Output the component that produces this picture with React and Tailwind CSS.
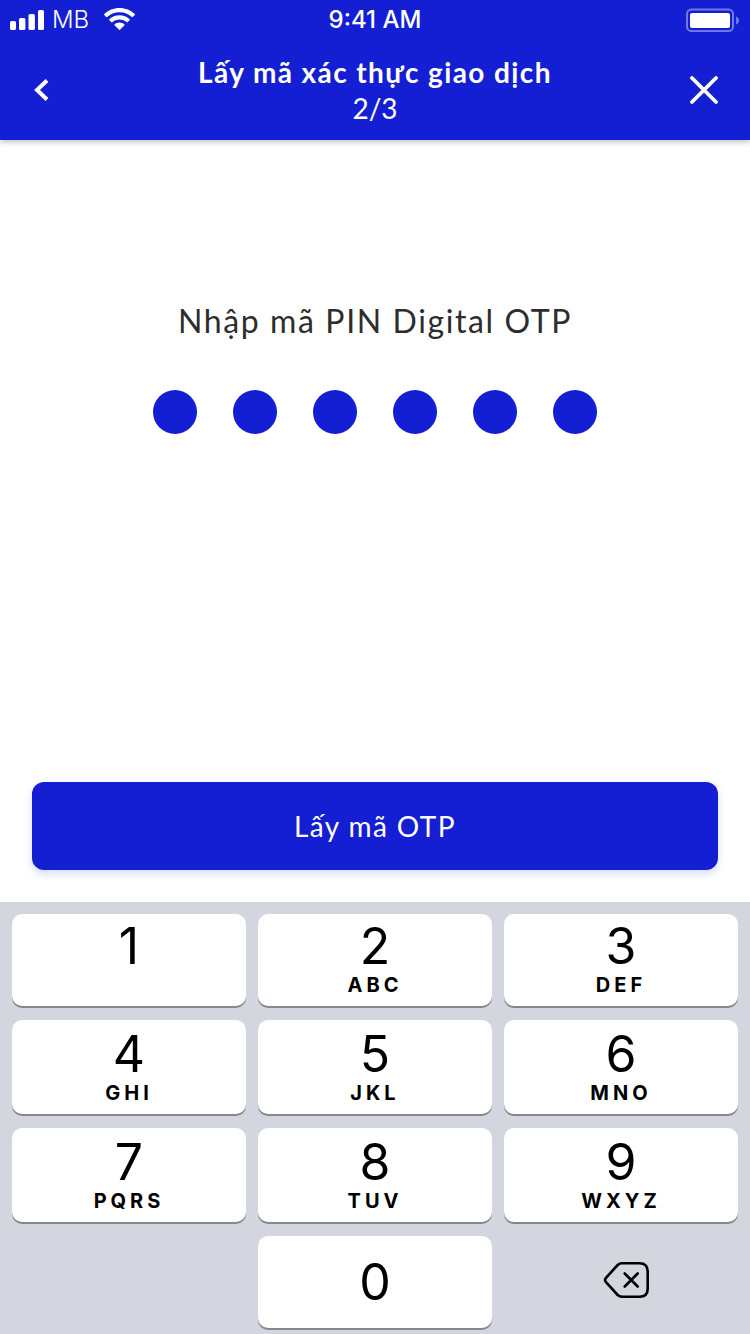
import { useState } from "react";

const KEYS = [
  { digit: "1", letters: "" },
  { digit: "2", letters: "ABC" },
  { digit: "3", letters: "DEF" },
  { digit: "4", letters: "GHI" },
  { digit: "5", letters: "JKL" },
  { digit: "6", letters: "MNO" },
  { digit: "7", letters: "PQRS" },
  { digit: "8", letters: "TUV" },
  { digit: "9", letters: "WXYZ" },
];

const PIN_LENGTH = 6;

function StatusBar() {
  return (
    <div className="grid h-10 grid-cols-3 items-center px-[10px] font-['Inter',sans-serif] text-2xl leading-10">
      <div className="flex items-center">
        <svg width="34" height="20" viewBox="0 0 34 20" fill="currentColor" aria-hidden="true">
          <rect x="0" y="11" width="6" height="9" rx="1.6" />
          <rect x="9" y="8" width="6.4" height="12" rx="1.6" />
          <rect x="18.5" y="4" width="6.4" height="16" rx="1.6" />
          <rect x="28" y="0" width="6" height="20" rx="1.6" />
        </svg>
        <span className="ml-2 font-light">MB</span>
        <svg className="mb-[2px] ml-[15px]" width="31" height="22" viewBox="0 0 31 22" fill="currentColor" aria-hidden="true">
          <path d="M15.500 0C9.600 0 4.200 2.300 0.200 6.100C-0.050 6.350 -0.050 6.700 0.200 6.950L2.300 9.050C2.550 9.300 2.900 9.300 3.150 9.050C6.400 6 10.700 4.250 15.500 4.250S24.600 6 27.850 9.050C28.100 9.300 28.450 9.300 28.700 9.050L30.800 6.950C31.050 6.700 31.050 6.350 30.800 6.100C26.800 2.300 21.400 0 15.500 0Z" />
          <path d="M15.500 7.300C11.600 7.300 8 8.800 5.350 11.300C5.100 11.550 5.100 11.900 5.350 12.150L7.450 14.250C7.700 14.500 8.050 14.500 8.300 14.250C10.200 12.550 12.700 11.500 15.500 11.500S20.800 12.550 22.700 14.250C22.950 14.500 23.300 14.500 23.550 14.250L25.650 12.150C25.900 11.900 25.900 11.550 25.650 11.300C23 8.800 19.400 7.300 15.500 7.300Z" />
          <path d="M15.500 14.600C13.600 14.600 11.900 15.300 10.550 16.400C10.300 16.650 10.300 17 10.550 17.250L15.050 21.750C15.300 22 15.700 22 15.950 21.750L20.450 17.250C20.700 17 20.700 16.650 20.450 16.400C19.100 15.300 17.400 14.600 15.500 14.600Z" />
        </svg>
      </div>
      <span className="text-center font-medium">9:41 AM</span>
      <svg className="-mr-px justify-self-end" width="55" height="24" viewBox="0 0 55 24" aria-hidden="true">
        <rect x="1" y="1.500" width="46" height="21.500" rx="4.500" fill="none" stroke="currentColor" strokeOpacity="0.4" strokeWidth="2" />
        <rect x="4" y="5" width="40" height="15" rx="2" fill="currentColor" />
        <path d="M50 8.500C51.800 9.100 53 10.500 53 12.500S51.800 15.900 50 16.500Z" fill="currentColor" fillOpacity="0.4" />
      </svg>
    </div>
  );
}

function Header() {
  return (
    <div className="grid min-h-[100px] grid-cols-[52px_1fr_52px] items-center px-5">
      <button type="button" aria-label="Quay lại" className="flex size-[42px] items-center justify-center">
        <svg width="16" height="24" viewBox="0 0 16 24" fill="none" stroke="currentColor" strokeWidth="4" aria-hidden="true">
          <path d="M14 2.500L4 12L14 21.500" />
        </svg>
      </button>
      <div className="text-center text-[28px] leading-9">
        <h1 className="font-bold tracking-wider">Lấy mã xác thực giao dịch</h1>
        <p>2/3</p>
      </div>
      <button type="button" aria-label="Đóng" className="flex size-[52px] items-center justify-center">
        <svg width="28" height="28" viewBox="0 0 28 28" fill="none" stroke="currentColor" strokeWidth="3.800" strokeLinecap="round" aria-hidden="true">
          <path d="M2 2L26 26M26 2L2 26" />
        </svg>
      </button>
    </div>
  );
}

function Key({ digit, letters, onPress }) {
  return (
    <button
      type="button"
      onClick={() => onPress(digit)}
      className="flex flex-col items-center justify-end gap-1 rounded-[10px] bg-white pb-[11px] shadow-[0_2px_0_#85878b]"
    >
      <span className="text-[50px] leading-[50px]">{digit}</span>
      <span className="h-5 text-xl leading-5 font-bold tracking-[4px]">{letters}</span>
    </button>
  );
}

function Keypad({ onDigit, onDelete }) {
  return (
    <div className="grid grid-cols-3 grid-rows-[92px_94px_94px_92px] gap-x-3 gap-y-[14px] bg-[#d3d6de] px-3 pt-3 pb-[6px] font-['Inter',sans-serif] text-black">
      {KEYS.map((key) => (
        <Key key={key.digit} {...key} onPress={onDigit} />
      ))}
      <button
        type="button"
        onClick={() => onDigit("0")}
        className="col-start-2 flex items-center justify-center rounded-[10px] bg-white text-[50px] leading-[50px] shadow-[0_2px_0_#85878b]"
      >
        0
      </button>
      <button type="button" aria-label="Xóa" onClick={onDelete} className="flex items-center justify-center">
        <svg width="60" height="40" viewBox="0 0 60 40" fill="none" stroke="currentColor" strokeWidth="2.600" strokeLinecap="round" strokeLinejoin="round" aria-hidden="true">
          <path d="M31 1.300H48.500C54 1.300 56.700 4 56.700 9.500V26.500C56.700 32 54 34.700 48.500 34.700H31C29.200 34.700 28 34.200 26.700 33L15 20.200C13.600 18.600 13.600 17.400 15 15.800L26.700 3C28 1.800 29.200 1.300 31 1.300Z" />
          <path d="M33.700 11.500L46.700 24.500M46.700 11.500L33.700 24.500" />
        </svg>
      </button>
    </div>
  );
}

export default function App() {
  const [pin, setPin] = useState("000000");

  return (
    <div className="flex min-h-screen flex-col bg-white font-['Lato',sans-serif]">
      <header className="bg-[#141ed2] text-white shadow-[0_2px_6px_rgba(0,0,0,0.25)]">
        <StatusBar />
        <Header />
      </header>
      <main className="flex grow flex-col px-8 pt-[161px] pb-8">
        <h2 className="text-center text-[32px] leading-10 tracking-wider text-[#2d2d2d]">Nhập mã PIN Digital OTP</h2>
        <div role="img" aria-label={`${pin.length}/${PIN_LENGTH}`} className="mt-[49px] flex justify-center gap-9">
          {Array.from({ length: PIN_LENGTH }, (_, i) => (
            <span key={i} className={i < pin.length ? "size-11 rounded-full bg-[#141ed2]" : "size-11 rounded-full border-2 border-[#141ed2]"} />
          ))}
        </div>
        <button
          type="button"
          className="mt-auto h-[88px] w-full rounded-xl bg-[#141ed2] text-[28px] leading-9 tracking-wider text-white shadow-[0_4px_8px_rgba(20,70,230,0.18)]"
        >
          Lấy mã OTP
        </button>
      </main>
      <Keypad
        onDigit={(d) => setPin((p) => (p.length < PIN_LENGTH ? p + d : p))}
        onDelete={() => setPin((p) => p.slice(0, -1))}
      />
    </div>
  );
}
